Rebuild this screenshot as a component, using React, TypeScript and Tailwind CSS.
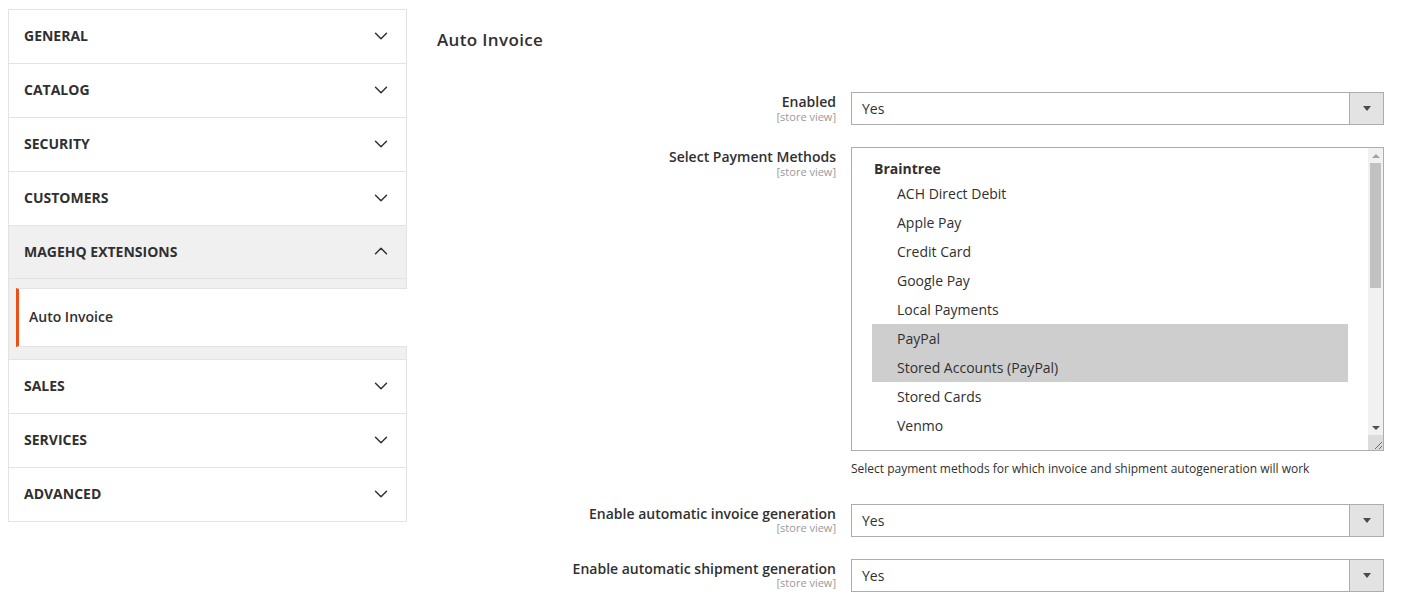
import { ChevronDown, ChevronUp } from "lucide-react";

const before = ["GENERAL", "CATALOG", "SECURITY", "CUSTOMERS"];
const after = ["SALES", "SERVICES", "ADVANCED"];
const methods = ["ACH Direct Debit", "Apple Pay", "Credit Card", "Google Pay", "Local Payments", "PayPal", "Stored Accounts (PayPal)", "Stored Cards", "Venmo"];
const selected = ["PayPal", "Stored Accounts (PayPal)"];

const NavRow = ({ title }: { title: string }) => (
  <div className="flex h-[54px] items-center justify-between border-b border-[#e3e3e3] pb-[2px] pl-[15px] pr-[14px] last:h-[53px] last:border-b-0">
    <span className="text-[14px] font-bold text-[#303030]">{title}</span>
    <ChevronDown className="h-[22px] w-[22px] text-[#303030]" strokeWidth={1.6} />
  </div>
);

const Label = ({ text, tight }: { text: string; tight?: boolean }) => (
  <div className="w-[429px] shrink-0 pr-[15px] text-right">
    <div className={`text-[14px] font-semibold text-[#303030] ${tight ? "pt-px leading-[17px]" : "leading-[19px]"}`}>{text}</div>
    <div className="text-[11px] leading-[12px] text-[#999999]">[store view]</div>
  </div>
);

const SelectBox = () => (
  <div className="flex h-[33px] w-[533px] border border-[#adadad] bg-white">
    <div className="flex flex-1 items-center pl-[10px] text-[14px] text-[#303030]">Yes</div>
    <div className="flex w-[34px] items-center justify-center border-l border-[#adadad] bg-[#e3e3e3]">
      <div className="h-0 w-0 border-x-[4px] border-t-[5px] border-x-transparent border-t-[#514943]" />
    </div>
  </div>
);

export default function App() {
  return (
    <div className="flex h-[606px] w-[1402px] overflow-hidden bg-white pl-2 pt-[9px] font-['Open_Sans',sans-serif]">
      <aside className="w-[399px] shrink-0 self-start border border-[#e3e3e3]">
        {before.map((t) => <NavRow key={t} title={t} />)}
        <div className="flex h-[53px] items-center justify-between border-b border-[#e3e3e3] bg-[#f0f0f0] pb-[2px] pl-[15px] pr-[14px]">
          <span className="text-[14px] font-bold text-[#303030]">MAGEHQ EXTENSIONS</span>
          <ChevronUp className="h-[22px] w-[22px] text-[#303030]" strokeWidth={1.6} />
        </div>
        <div className="bg-[#f0f0f0] pb-[12px] pl-[7px] pt-[9px]">
          <div className="-mr-px flex h-[59px] items-center border-y border-[#e3e3e3] border-l-[3px] border-l-[#ec5016] bg-white pb-[2px] pl-[10px] text-[14px] font-semibold text-[#303030]">
            Auto Invoice
          </div>
        </div>
        <div className="border-t border-[#e3e3e3]">
          {after.map((t) => <NavRow key={t} title={t} />)}
        </div>
      </aside>

      <main className="ml-[30px] min-w-0 flex-1">
        <h2 className="pt-[19px] text-[17px] font-semibold leading-[24px] tracking-[0.35px] text-[#303030]">Auto Invoice</h2>

        <div className="mt-[40px] -ml-[15px] flex">
          <Label text="Enabled" />
          <SelectBox />
        </div>

        <div className="mt-[22px] -ml-[15px] flex">
          <Label text="Select Payment Methods" />
          <div>
            <div className="flex h-[304px] w-[533px] overflow-hidden border border-[#adadad] bg-white">
              <div className="flex-1 pl-[20px] pr-[20px] pt-[10px] text-[14px] text-[#303030]">
                <div className="pl-[2px] text-[14px] font-bold leading-[21px]">Braintree</div>
                {methods.map((m) => (
                  <div key={m} className={`h-[29px] pl-[25px] leading-[29px] ${selected.includes(m) ? "bg-[#cecece]" : ""}`}>{m}</div>
                ))}
              </div>
              <div className="flex w-[15px] flex-col bg-[#f1f1f1]">
                <div className="flex h-[15px] items-center justify-center">
                  <div className="h-0 w-0 border-x-[4px] border-b-[4px] border-x-transparent border-b-[#a3a3a3]" />
                </div>
                <div className="mx-[2px] h-[125px] bg-[#c1c1c1]" />
                <div className="flex flex-1 items-end justify-center pb-[5px]">
                  <div className="h-0 w-0 border-x-[4px] border-t-[4px] border-x-transparent border-t-[#505050]" />
                </div>
                <div className="h-[15px] bg-[#dcdcdc]">
                  <svg viewBox="0 0 15 15" className="h-[15px] w-[15px]">
                    <path d="M7 14 L14 7 M11 14 L14 11" stroke="#6b6b6b" strokeWidth="1" fill="none" />
                  </svg>
                </div>
              </div>
            </div>
            <p className="mt-[9px] text-[12px] leading-[17px] text-[#303030]">Select payment methods for which invoice and shipment autogeneration will work</p>
          </div>
        </div>

        <div className="mt-[27px] -ml-[15px] flex">
          <Label text="Enable automatic invoice generation" tight />
          <SelectBox />
        </div>

        <div className="mt-[22px] -ml-[15px] flex">
          <Label text="Enable automatic shipment generation" tight />
          <SelectBox />
        </div>
      </main>
    </div>
  );
}
